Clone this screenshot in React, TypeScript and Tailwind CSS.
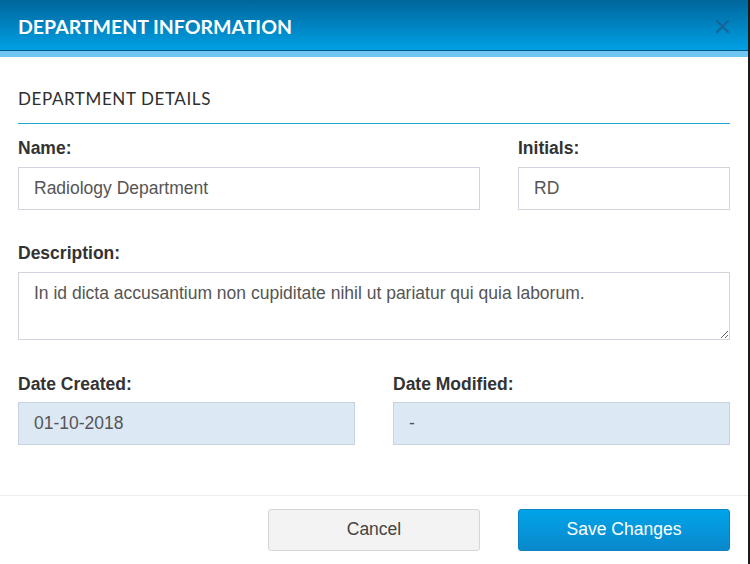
import React from 'react';

const labelCls = "block text-[17.5px] leading-[20px] font-bold text-[#333]";
const inputCls =
  "w-full h-[43px] px-[15px] text-[17.5px] text-[#555] bg-white border border-[#d4d4de] outline-none font-['Liberation_Sans',Arial,sans-serif]";
const readOnlyCls =
  "w-full h-[43px] px-[15px] text-[17.5px] text-[#555] bg-[#dde8f5] border border-[#c8d3e0] outline-none font-['Liberation_Sans',Arial,sans-serif]";

const DepartmentModal: React.FC = () => {
  return (
    <div className="w-[750px] h-[564px] bg-white border-r-2 border-[#1b1b1b] flex flex-col overflow-hidden font-['Liberation_Sans',Arial,sans-serif]">
      <div className="h-[50px] shrink-0 bg-gradient-to-b from-[#00669c] to-[#00a1e5] flex items-center justify-between pl-[18px] pr-[19px]">
        <h1 className="text-white text-[19.5px] font-bold font-['Lato',sans-serif] pt-[3px]">
          DEPARTMENT INFORMATION
        </h1>
        <button className="w-[14px] h-[14px] flex items-center justify-center mt-[2px]">
          <svg width="13" height="13" viewBox="0 0 13 13">
            <path d="M1 1L12 12M12 1L1 12" stroke="#15649a" strokeWidth="2.2" strokeLinecap="square" />
          </svg>
        </button>
      </div>
      <div className="h-px bg-[#00578a] shrink-0" />
      <div className="h-[6px] bg-[#70c6f2] shrink-0" />

      <div className="px-[18px]">
        <h2 className="mt-[30px] text-[17px] leading-[24px] text-[#2e2e2e] font-['Lato',sans-serif] tracking-[0.6px]">
          DEPARTMENT DETAILS
        </h2>
        <div className="mt-[12px] h-px bg-[#23a6d5]" />

        <div className="mt-[14px] flex gap-[38px]">
          <div className="flex-1">
            <label className={labelCls + " mb-[9px]"}>Name:</label>
            <input className={inputCls} defaultValue="Radiology Department" />
          </div>
          <div className="w-[212px]">
            <label className={labelCls + " mb-[9px]"}>Initials:</label>
            <input className={inputCls} defaultValue="RD" />
          </div>
        </div>

        <div className="mt-[33px]">
          <label className={labelCls + " mb-[9px]"}>Description:</label>
          <textarea
            className="block w-full h-[68px] px-[15px] pt-[9px] text-[17.5px] leading-[22px] text-[#555] bg-white border border-[#d4d4de] outline-none font-['Liberation_Sans',Arial,sans-serif]"
            defaultValue="In id dicta accusantium non cupiditate nihil ut pariatur qui quia laborum."
          />
        </div>

        <div className="mt-[34px] grid grid-cols-2 gap-[38px]">
          <div>
            <label className={labelCls + " mb-[8px]"}>Date Created:</label>
            <input className={readOnlyCls} readOnly defaultValue="01-10-2018" />
          </div>
          <div>
            <label className={labelCls + " mb-[8px]"}>Date Modified:</label>
            <input className={readOnlyCls} readOnly defaultValue="-" />
          </div>
        </div>
      </div>

      <div className="mt-[50px] h-px bg-[#ededed]" />
      <div className="flex justify-end gap-[38px] px-[18px] pt-[13px]">
        <button className="w-[212px] h-[42px] pb-[2px] rounded-[3px] bg-[#f3f3f3] border border-[#d6d6d6] text-[17.5px] text-[#444]">
          Cancel
        </button>
        <button className="w-[212px] h-[42px] pb-[2px] rounded-[3px] bg-gradient-to-b from-[#00a4e9] to-[#0a88cc] border border-[#0a82c4] text-[17.5px] text-white">
          Save Changes
        </button>
      </div>
    </div>
  );
};

export default function App() {
  return <DepartmentModal />;
}
